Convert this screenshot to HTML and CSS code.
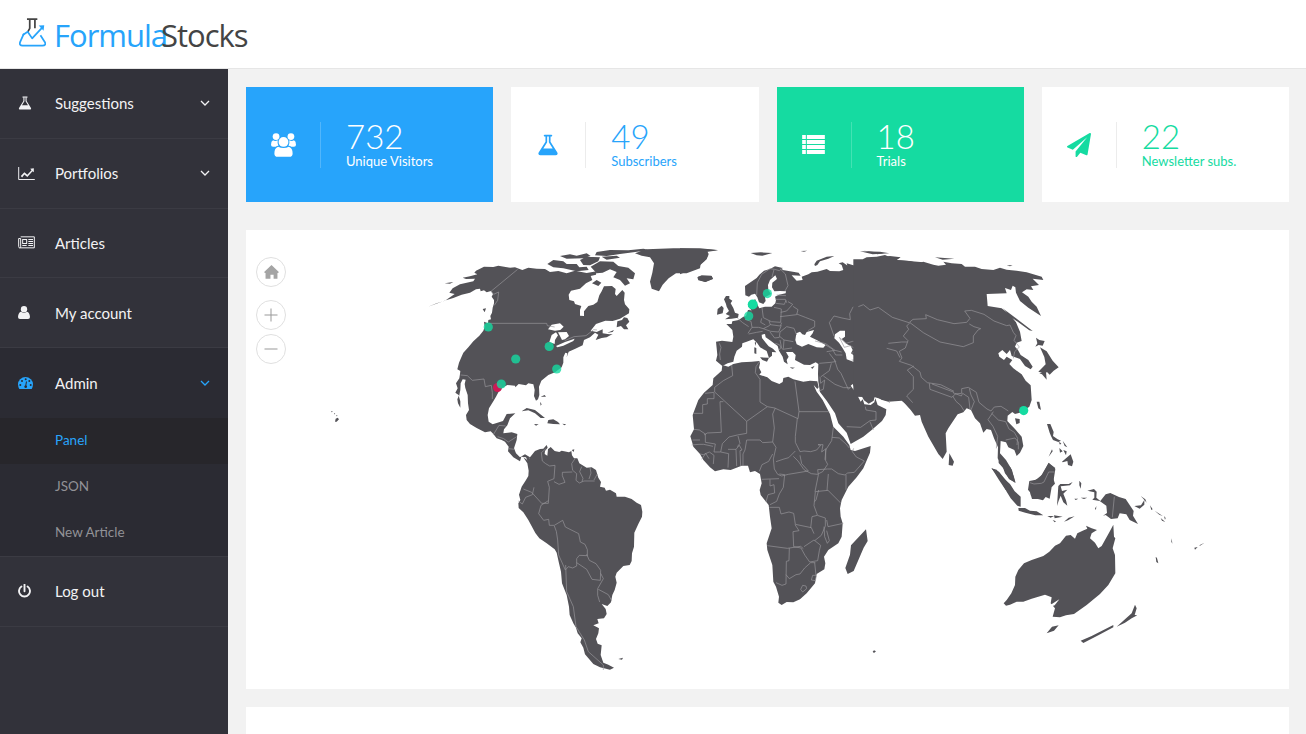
FILE: index.html
```html
<!DOCTYPE html>
<html lang="en">
<head>
<meta charset="utf-8">
<title>FormulaStocks</title>
<link rel="stylesheet" href="styles.css">
</head>
<body>
<svg class="defs" width="0" height="0">
  <symbol id="flask" viewBox="0 0 1664 1792"><path d="M1527 1447q56 89 21.500 153t-140.500 64h-1152q-106 0-140.500-64t21.500-153l503-793v-399h-64q-26 0-45-19t-19-45 19-45 45-19h512q26 0 45 19t19 45-19 45-45 19h-64v399zm-779-725l-272 430h712l-272-430-20-31v-436h-128v436z"/></symbol>
  <symbol id="chevron" viewBox="0 0 10 6"><path d="M1 1l4 4 4-4" fill="none" stroke="currentColor" stroke-width="1.300"/></symbol>
</svg>
<header class="header">
  <svg class="logo-mark" viewBox="0 0 78 84">
    <g fill="none" stroke-linejoin="round">
      <path d="M23 3h30M31 4v26l-6 11M46 4v26" stroke="#444" stroke-width="5"/>
      <path d="M14 45L3 70q-3 10 7 10h58q11 0 7-10L62 50" stroke="#27a4fb" stroke-width="5"/>
      <path d="M11 49l14-9 13 19 29-31" stroke="#27a4fb" stroke-width="5"/>
    </g>
    <path d="M57 22l16-1-2 16z" fill="#27a4fb"/>
  </svg>
  <div class="logo-text"><span class="logo-blue">Formula</span><span class="logo-dark">Stocks</span></div>
</header>
<div class="shell">
  <nav class="sidebar">
    <div class="item"><span class="icon"><svg class="i-flask" viewBox="0 0 1664 1792"><use href="#flask"/></svg></span><span class="label w-sug">Suggestions</span><svg class="chev"><use href="#chevron"/></svg></div>
    <div class="item"><span class="icon"><svg class="i-wide" viewBox="0 0 51 40"><path d="M1.500 0v38.500H51" fill="none" stroke="currentColor" stroke-width="3"/><path d="M8 28l11-12 9 8 13-14-4-5 11-1v12l-4-3-16 18-9-8-7 9z" fill="currentColor"/></svg></span><span class="label">Portfolios</span><svg class="chev"><use href="#chevron"/></svg></div>
    <div class="item"><span class="icon"><svg class="i-wide" viewBox="0 0 51 38"><g fill="none" stroke="currentColor" stroke-width="3"><path d="M8 2h41v33H5q-3 0-3-4V7h6v25q0 3-3 3M31 10h14M31 16h14M31 22h14M13 28h13M31 28h14"/><rect x="14" y="10" width="12" height="12"/></g></svg></span><span class="label">Articles</span></div>
    <div class="item"><span class="icon"><svg class="i-user" viewBox="0 0 36 39"><circle cx="18" cy="9.500" r="9.500"/><path d="M9 17q9 6 18 0 8 2 9 16 0 6-6 6H6q-6 0-6-6 1-14 9-16z"/></svg></span><span class="label">My account</span></div>
    <div class="item open"><span class="icon"><svg class="i-dash" viewBox="0 0 45 36"><path d="M4 36Q0 30 0 22a22.500 22 0 0145 0q0 8-4 14z"/><g fill="#2b2b33"><circle cx="7" cy="24" r="3"/><circle cx="12" cy="12" r="3"/><circle cx="23" cy="7" r="3"/><circle cx="34" cy="12" r="3"/><circle cx="38" cy="24" r="3"/><path d="M24 13l3 1-2 11q4 3 1 7-4 3-7-1-1-5 3-6z"/></g></svg></span><span class="label">Admin</span><svg class="chev"><use href="#chevron"/></svg></div>
    <div class="sub current">Panel</div>
    <div class="sub">JSON</div>
    <div class="sub">New Article</div>
    <div class="item last"><span class="icon"><svg class="i-power" viewBox="0 0 38 40"><path d="M10 7a16 16 0 1018 0M19 1v20" fill="none" stroke="currentColor" stroke-width="5.500" stroke-linecap="round"/></svg></span><span class="label">Log out</span></div>
  </nav>
  <main class="content">
    <section class="cards">
      <article class="card blue-bg"><div class="card-icon"><svg width="25" height="24" viewBox="0 0 74 70"><circle cx="15" cy="10" r="10"/><circle cx="59" cy="10" r="10"/><circle cx="37" cy="26" r="14.500"/><path d="M6 21q6 4 14 0-2 8 2 16-5 0-8 3H6q-6 0-6-6 0-10 6-13zM68 21q-6 4-14 0 2 8-2 16 5 0 8 3h8q6 0 6-6 0-10-6-13zM21 40q16 8 32 0 11 4 11 20 0 10-10 10H20q-10 0-10-10 0-16 11-20z"/></svg></div><div class="card-body"><b>732</b><span>Unique Visitors</span></div></article>
      <article class="card blue"><div class="card-icon"><svg width="22" height="24" viewBox="0 0 1664 1792"><use href="#flask"/></svg></div><div class="card-body"><b>49</b><span>Subscribers</span></div></article>
      <article class="card green-bg"><div class="card-icon"><svg width="23" height="19" viewBox="0 0 68 57"><path d="M0 0h11v12H0zM14 0h54v12H14zM0 15h11v12H0zM14 15h54v12H14zM0 30h11v12H0zM14 30h54v12H14zM0 45h11v12H0zM14 45h54v12H14z"/></svg></div><div class="card-body"><b>18</b><span>Trials</span></div></article>
      <article class="card green"><div class="card-icon"><svg width="24" height="24" viewBox="0 0 1792 1792"><path d="M1764 11q33 24 27 64l-256 1536q-5 29-32 45-14 8-31 8-11 0-24-5l-453-185-242 295q-18 23-49 23-13 0-22-4-19-7-30.500-23.500t-11.500-36.500v-349l864-1059-1069 925-395-162q-37-14-40-55-2-40 32-59l1664-960q15-9 32-9 20 0 36 11z"/></svg></div><div class="card-body"><b>22</b><span>Newsletter subs.</span></div></article>
    </section>
    <section class="map-panel">
      <svg class="map" viewBox="246 230 1043 459">
        <!-- North America -->
        <g transform="translate(420 240) scale(.33333)">
          <path class="land" d="M24 200L55 189 80 180 100 174 125 164 150 158 168 148 180 146 182 154 192 151 200 157 213 153 219 162 215 170 222 180 222 190 218 203 216 218 211 228 213 238 205 240 204 250 192 245 194 260 190 272 178 287 160 304 145 322 130 338 124 352 117 368 112 388 121 393 120 402 118 415 108 430 113 445 106 458 117 466 112 478 114 490 121 503 121 484 117 470 121 450 122 430 128 418 137 419 134 432 136 444 143 465 144 490 147 510 138 525 140 540 150 552 170 564 195 577 212 574 220 582 230 595 245 600 255 605 266 620 264 634 280 652 300 664 304 650 318 652 325 668 330 652 315 643 300 652 288 640 282 625 290 600 292 582 275 577 250 580 252 568 262 556 270 535 286 520 260 522 249 543 218 553 206 545 203 525 207 505 220 484 228 470 240 448 262 435 285 437 286 442 296 432 318 436 325 430 340 433 344 450 342 468 348 482 354 478 358 465 357 440 364 422 385 405 405 397 425 382 430 368 430 352 436 338 442 340 440 352 446 335 466 326 488 316 492 300 510 292 525 278 535 284 527 300 545 294 560 292 578 282 568 283 548 280 548 268 530 276 512 272 528 252 556 242 578 243 600 236 627 220 628 208 615 193 612 180 614 158 607 150 590 168 585 162 587 147 576 138 552 139 545 154 538 166 532 186 520 194 505 198 492 214 492 228 480 227 480 210 484 198 465 192 462 184 448 180 446 164 453 152 480 146 498 130 517 120 512 108 528 104 530 94 500 99 465 92 440 100 415 93 390 96 375 87 350 86 325 83 307 90 285 82 270 83 235 77 220 81 192 80 168 92 163 98 172 103 150 109 128 113 138 117 165 116 160 124 120 133 98 145 88 158 104 162 75 182 50 190z"/>
          <path class="land" d="M382 72L400 60 430 64 440 72 470 72 478 82 500 80 506 90 470 94 430 85 400 82zM420 48L450 43 470 47 500 40 512 48 490 55 440 56zM480 60L500 50 540 52 535 64 510 76 490 75zM530 36L570 30 625 31 670 26 690 30 640 37 600 42 560 48 525 46zM512 80L540 64 580 65 595 78 625 83 645 100 640 118 620 115 630 130 615 137 600 120 580 112 590 96 570 88 548 98 530 100zM516 130L530 120 544 128 535 138zM545 50L590 47 600 53 560 59zM645 40L680 28 760 25 840 25 892 30 862 34 866 42 860 58 842 72 840 85 800 100 768 100 746 115 728 134 717 154 695 146 690 125 697 98 702 70 690 52 665 47zM834 110L848 108 860 110 875 108 879 117 856 126 838 120zM74 130l26-4-10 5zM188 207l10-2-4 12zM592 244L606 240 612 232 622 234 628 245 618 256 625 268 612 268 603 258 590 262zM562 278l20-8-4 6zM305 514L320 504 345 510 360 522 375 534 362 534 345 520 325 511zM385 540L400 538 414 546 420 553 400 552 382 550zM342 552l14 1-8 4zM427 551l12 2-6 3zM362 470l12-5 4 5M360 485l5 8-3 4z"/>
          <path class="water" d="M384 268L395 254 420 250 431 260 421 270 405 272zM388 306L395 285 408 277 414 286 405 300 404 312zM414 277L440 276 447 288 435 298 426 300 420 288zM408 318L435 306 464 296 460 303 430 317 412 322z"/>
          <path class="line" d="M293 88L213 154l8 9 15-7-3 25-10 15M205 250H380l2 7 22 4M434 302l28-12 36-3 23-18 10 1M122 405l20 2 15 14 35-4 4 23 18-4 3 22 0 19M220 584l17-28 20 2M233 590l18 6 14 10 25-16M265 626l20 2"/>
        </g>
        <!-- South America -->
        <g transform="translate(440 370) scale(.33333)">
          <path class="land" d="M250 262L265 272 270 262 285 243 300 237 310 236 320 225 323 233 315 243 314 252 322 257 324 238 332 231 344 243 358 246 365 242 387 247 394 243 396 256 402 265 412 265 418 280 440 293 455 292 468 300 475 323 483 336 480 350 494 353 498 362 510 359 528 370 530 380 555 380 575 387 590 398 603 405 607 425 606 440 595 462 583 488 582 530 576 550 575 573 569 585 550 588 530 608 526 620 530 638 524 660 517 675 513 697 502 708 485 702 497 717 500 732 492 745 472 747 476 760 460 766 477 775 475 790 468 807 473 821 485 826 482 855 490 878 505 884 522 893 510 899 480 892 460 882 435 853 430 833 421 817 425 805 413 790 408 773 400 760 389 735 387 710 380 675 366 640 363 605 357 580 350 548 344 538 320 520 298 505 286 489 265 450 250 427 236 414 235 400 241 390 237 374 245 350 258 330 265 318 266 302 262 280zM535 867l14-4-3 6zM395 240l8-2-2 8z"/>
          <path class="line" d="M318 236l-14 12 3 25 10 8 12 7 16-2-3 40-19 8 5 18-3 48-20 0-30-33-25-10M282 352l-5 22-20 8-10 20-12-9M325 392l-22 14-7 25 15 20 15-3 2 18 15 0 25-15 8 20 40 20 5 25 14 7 7 16 0 18-24-1-8 10v22l-12 6-13-4-9 10-20-45-3-45-4-26-6-16M342 335l15 8 18-6-8-20 0-10 30-1M405 266l-10 15 3 20 12 10-2 20 10 8 14-6 32 0M425 290l-6 15 10 20-3 10M450 293l3 16-6 18M472 312l-10 18M410 578l30 20 16 30 25 3 1-30-14-20-20-10-8-18M377 585l3 80 20 45 8 60 25 40 12 35 45 40v15M482 610l8 16-17 30 0 20 6 20M475 658l30 16 10 18"/>
        </g>
        <!-- Europe and western Asia -->
        <g transform="translate(680 240) scale(.33333)">
          <path class="land" d="M195 138L230 114 238 104 252 92 270 87 285 79 305 83 308 90 330 94 356 98 362 107 335 106 343 115 350 122 368 120 365 110 385 103 395 97 412 95 430 90 440 87 450 93 478 94 490 90 485 75 476 70 488 67 500 75 510 83 522 98 517 108 514 94 505 87 500 70 535 80 530 70 550 62 570 58 590 52 630 48 662 52 650 60 730 67 730 525 710 525 695 507 678 492 665 482 625 485 604 479 585 466 581 482 566 491 552 481 545 468 526 450 518 432 512 437 530 462 542 485 548 478 553 493 572 495 583 487 586 475 593 495 619 508 617 525 606 543 575 570 550 590 512 612 500 578 475 550 465 520 440 482 420 456 415 425 414 402 415 372 407 367 390 375 372 374 355 365 345 360 347 345 338 336 328 336 318 336 326 350 320 360 323 373 312 365 308 350 297 332 293 318 272 302 257 292 255 282 245 284 246 294 256 307 266 319 279 326 289 337 276 336 276 347 267 354 260 333 240 322 232 310 220 298 200 305 187 310 186 320 170 332 163 350 160 365 143 370 127 378 108 362 112 345 110 325 108 305 126 302 157 306 160 290 157 270 139 252 155 252 157 244 176 240 190 230 198 228 204 210 214 210 205 200 208 186 226 178 230 190 238 205 255 200 275 200 286 190 288 180 285 170 297 164 317 160 318 154 300 153 283 154 276 142 277 128 291 117 286 106 270 120 264 135 265 150 273 162 255 172 257 183 250 192 237 187 232 172 225 161 214 164 207 170 196 166z"/>
          <path class="land" d="M132 178L138 168 148 168 148 176 157 182 152 190 160 204 165 218 176 222 174 233 155 236 135 238 150 228 137 222 147 213 140 200 138 192zM113 207L125 197 131 204 128 220 111 224zM52 112L65 106 94 107 99 116 76 126 55 121zM0 25L80 28 115 31 78 36 85 45 75 62 55 80 0 103zM212 39l30-2 35 2-30 8-17-1zM362 33l20-1-10 3zM403 73L410 62 440 50 463 48 445 56 420 64 412 75 405 78zM540 34l60 1 28 5-50 3zM240 352l27 1-6 12-14-5zM223 322l6 2 0 18-6-2zM224 308l4-2v12zM329 382l16 1-8 3zM392 383l12-6-6 9z"/>
          <path class="water" d="M349 280L360 275 367 283 375 285 380 276 402 270 398 280 390 290 410 300 437 315 430 323 410 322 385 312 366 320 350 313 346 300zM465 283L480 272 495 272 495 290 485 297 500 312 512 318 518 330 513 340 527 350 533 363 520 365 500 358 497 340 488 325 477 308 463 295z"/>
          <path class="line" d="M230 166l2-38 13-25 25-17 14 2 14 4 10-8M276 111l6-22M300 86l16 16 8 35-9 16M286 178l30 0 4 10M288 190l25 3 5-12M290 165l28 2M246 203l4 30 24 12 28 2 2-40-22-5M302 217l18-4 18-20-14-8M300 230l50-6 4-15-15-10M305 248l-4 10-30-4-4-12M350 222l26 10 28 11 0 17-20 12M208 210l8 3M195 238l18 6 3 18-12 18M172 234l16 14 18 12M216 262l20 0 14 4 18-9 4-5M245 235l-3 12 14 8M206 282l24-5 18-3M250 266l22 8 24 2 8-20M270 276l14 18 14-2 2-16 20-16 22 5 8 20M300 290l12 10 28 5M286 310l12 4 10 14 28-4M300 300l4 20-6 10M312 300l-2 26M118 310l5 12-4 20 2 18M405 303l32 8 28 20 20 5M437 315l20 12 10 18 20 0M440 335l25-4M448 340l20 26M462 288l-14-40 14-20 24 6 25 5-2-18 10-20 28-4 22 8 10 7 40 27 44 18 18 4-16 25-10 40-48 10-30-8-14-14-30-10-15 0-20 6-20-18 15 30 18-5 28 18 12 6 15 0 20 6 20 16M515 340l22-8 42 28 28-4 12 12 50-10 12-12 25 30 12 12M515 360l40 2 35 15 4 30 18 30-4 24 20 14 0 14M590 377l18-10 38-4 12 6 4 30-16 20-6 18-28 6M660 370l32 4-6 22 14 6-2 42-18 22 8 20M463 358l10 30 10 12 22 48 8-8M418 370l35-3 12-2M454 370l-6 22-25 18M430 408l35 25 26 10 20 0M420 410l2 20 12-10-4 28-14 5M500 560l42 2 28-20 18-2 0-25-30-5-2-10M570 545l10 25M620 345l8-30 14-4 32 5M626 330l24 8 22-4"/>
        </g>
        <!-- Africa -->
        <g transform="translate(680 350) scale(.33333)">
          <path class="land" d="M127 45L145 50 160 42 185 37 215 35 238 33 240 40 237 53 244 67 238 74 262 82 275 93 298 102 308 96 310 84 325 80 340 88 370 95 390 92 412 94 416 112 412 117 401 105 410 125 428 150 450 192 460 230 490 260 508 285 512 300 525 303 572 288 570 308 550 355 530 382 505 410 485 450 480 475 482 500 488 520 485 560 475 580 445 600 432 620 436 640 433 658 410 672 405 700 380 730 360 748 340 757 320 756 305 765 295 758 297 740 288 710 280 695 277 645 262 600 260 580 275 535 270 500 266 465 242 435 239 420 245 400 240 372 225 363 210 367 204 347 185 347 152 360 130 358 105 364 90 352 70 330 60 312 40 290 36 275 31 259 42 238 38 195 55 150 72 128 98 105 100 85 125 62zM558 538l5 35-12 20-30 70-18 9-7-18 14-40 3-28zM578 905l4-4 6 3-6 5z"/>
          <path class="line" d="M155 45l3 32-28 15-26 20v14l96 88 62-44M75 130l28-3M40 190h28v-26l14-2v-16h20v-17M72 255l10-6 42-2-4-92 10 0M238 35l-10 15-2 18 14 20 0 68 22 14 22 4 70 32 3-22-12-90M357 185h91M352 205l-6 54 0 18 14 28 12-2 20 2 18-5 12-14-8-2 15 0-4 22 13-10-3 32 8 15-15 22-16 8-18-2-22-12-18-26-14-14M286 174l-8 18 5 42-5 42 10 16-8 35 3 30 10 16 12 5 20-5 60-10-20-22-5-25M288 335l24-8 14-4 20-20M278 276l-30 2-8-8-40 0-5 30-6 12 0 35M200 214l0 36-28 5-25 6-20 20-5 25-20 0 4-24-30-5 0-25-18-12-16-2M35 285l22-2 14 0 28 6M38 270l22 0M60 312l10 2 18-8 14 10-2 26M65 328l12-18 10 16M122 306l24 5-2 42M144 298h24l2 50M168 298l10-12 8 14-6 2 2 46M174 258l6 22-8 10M238 364l8-20 20-10 12-22M245 388l52-2M270 388v20l12-4 2 25-20 5-6 22M298 372l16 2-4 38-12 20-8 22-20 10M268 472h30l5 20 24-6 14 4 5 33 48 10 8 18M345 524l12 18-18 3 2 45 22 4M262 587l60 8 40-6 8 7M328 594l-1 38-8 2-1 68-12 4-18-8M318 674l10 12 20-12 12-2 14-18 18-16 14 0M363 594l12 22 14 20 24-4 5-30 4-16-20-16-30 20M392 534l4-34 16-4 24 8 0 24-12 28-20 16M404 638l4 38-10 0-4 14 12 2 3-14M362 718l6-12 10 2 2 8-12 10zM440 510l4 20 46-10M432 530l2 30 8 20 6-8-8-30M412 495l-10-28 4-42 38-4 38 38M405 425l10-50-2-16 30-2 12 0 20 14 20 4 8-6 20-2 30-34-24-12-12-16 4-10M445 372l-4 50M416 420l-8 30-4 5M498 375v45M460 232l-5 40-18 28 0 30M456 262l22 2 20 18 10 12"/>
        </g>
        <!-- Eastern Asia -->
        <g transform="translate(860 240) scale(.33333)">
          <path class="land" d="M-20 58L8 58 20 52 50 50 75 45 90 52 120 52 108 60 150 63 175 70 190 65 220 74 235 77 258 74 250 65 275 70 305 72 315 80 345 80 365 87 400 90 420 83 440 89 470 92 500 97 545 110 550 120 518 116 537 135 513 139 520 150 500 148 486 157 505 170 515 185 530 200 543 228 520 213 505 203 480 183 468 158 466 142 458 137 453 150 435 144 440 160 380 162 383 198 425 205 450 225 468 247 480 275 485 303 470 308 465 320 474 330 482 345 505 360 518 380 512 388 495 378 480 357 455 348 450 330 440 342 427 330 415 340 418 350 432 360 440 350 457 360 448 372 460 385 485 403 497 422 512 436 515 480 508 500 485 517 465 522 457 516 443 527 442 543 465 567 485 590 490 618 480 638 470 648 463 630 445 622 438 607 422 603 420 640 438 660 456 690 465 727 448 717 435 700 428 680 413 655 414 622 402 595 393 570 380 567 370 578 360 550 345 535 333 510 320 505 310 517 293 523 265 565 257 580 260 635 248 657 235 642 205 590 185 545 180 525 165 527 152 510 125 480 80 482 45 472 -20 470zM268 640l14 25-4 12-12-2zM12 32l60 8-20 3zM225 52l58 4-35 3zM440 76l18 0-8 3zM428 205l40 30 50 38-10-2-48-35zM528 293l10 7 16 3-6 14-12-2-10 5 6-10zM540 322l20 12 18 28 18 20-15 10-12 12-8-8-8 6-12-5-6-2 22-22-4-22zM538 400l20-5 2 24-14-16zM530 485l8 0 5 25-8-5zM465 535l14 2 0 12-10 4z"/>
          <path class="land" d="M395 685l22 10 40 50-20 5-20-30zM508 728l32-15 26-45 20 20-8 50-65 30z"/>
          <path class="line" d="M-5 200l15-6 20 16 25-8 42 30 50 16 12-10 40-2-2-12 35 15 50 12 38-4 10-12-16-22 20-2 38 12 30 20 38 14 10-2 10 22 8 10-6 14 16 20-14 14-4 20M150 248l40 30 50 28 70 14 30-12 0-20 14-18 8-4-20-6-14-8M150 248l-10 10 6 10-16 20 14 14-8 22-18 10 8 20-8 10 36 12 26 20 4 16 18 16 40 6 40 20M208 430l2 18 66 24 8-8-4-8-64-24M285 462l20-2 0-14 20-4 24 15 8 30 24 20 12 6 10-12 20-2 22 14M278 468l10 16 14 12 10 16M284 460l20 8 4-8 18 12 4 35M328 445l5 20 10 20-10 25M162 378l-20 12 18 20 0 38-20 20 18 20M400 515l-16 24 15 20 14 30-4 36M395 520l20 20 22 5 10 22 16 10 10 18-2 20M437 600l28-6 10 12 0 22M85 310l40-4 18 0M80 325l30 8 10 20"/>
        </g>
        <!-- Islands and Oceania -->
        <g transform="translate(960 400) scale(.33333)">
          <path class="land" d="M94 205l16 4 20 25 20 18 14 22 18 16 0 30-10-3-20-22-12-20-20-38-16-20zM115 165l15 18 22 20 10 28 5 18-20-12-15-30-16-18zM175 324l20 0 15 8 20 2 20 12-24 0-30-8-20-6zM208 243l20-4 20-16 18-34 20 15-8 14 2 18 5 15-10 10-6 35-12-5-8 10-15-4-18 0-6-20-6-8zM291 318l4-60 6-6 25 0 12-6-8 10-28 3 4 14 16-4-12 12 8 20 4 16-12-10-8-20-6 15zM261 72l10 0 10 24-2 12 14 10 10 4-8 4-16-6-6-12-4-10zM276 148l-10 22 12-16zM296 126l8 4-4 4zM298 144l10 10-8 4zM308 122l14 20-8-4zM310 150l10 4-2 12zM306 185l12-10 14-12 8 22-4 14-12-4-2-12-14 4zM358 242l6 8-2 16-4-10zM343 296l12 0-8 4zM362 293l20 0-10 4zM382 272l20-5 8 8-1 18 12 10 16-20 14-4 26 12 20 6 12 18 12 18-2 14 15 25-25-12-10-17-20-3-6 15-20 2-16-12-8 2 12-8-2-22-20-14-22-4 6-6 0-16zM523 318l20-2 10-16 0 14-14 12zM542 288l14 10 4 10-10-12zM570 316l8 12-4 2zM584 332l24 16-10-4zM602 354l14 12-10-4zM612 348l5 6-2 5zM262 348l20 0-10 5zM282 346l26 4-24 5zM278 360l10 4-4 3zM312 365l14-12 18-4-20 12zM405 326l4-8-1 12zM635 415l2 16-3-6zM587 470l4 4 4 16-6-4zM703 443l10-2-8 8zM718 436l16-8-14 9z"/>
          <path class="land" d="M131 610L140 600 154 580 165 555 166 530 175 510 192 490 215 480 250 468 268 455 285 437 300 430 318 407 332 405 345 416 352 400 368 392 382 386 378 377 395 385 411 390 395 400 390 415 405 428 415 445 425 438 435 420 450 393 460 374 462 410 466 415 458 445 465 465 466 520 445 555 420 582 380 615 342 642 318 646 300 652 278 650 285 625 272 610 275 592 255 584 215 596 190 605 170 605 150 614 138 617zM276 680l20-4-14 16-22 8zM362 722L395 708 460 675 460 682 415 706 370 729zM470 680L490 662 515 640 525 614 530 625 524 645 532 646 515 655 495 668z"/>
          <path class="water" d="M272 614l26-16-14 18-12 4z"/>
          <path class="line" d="M210 248l12 4 22-2 8-4 14-30 18 0M463 290l-6 62"/>
        </g>
        <!-- Hawaii -->
        <g transform="translate(240 225) scale(.33333)"><path class="land" d="M285 590l2-9 6-3 4 5-7 7zM273 558l6 2-4 2zM282 564l4 3-4 1zM288 570l5 2-3 2z"/></g>
        <g class="pins">
          <circle class="red" cx="497.500" cy="387.500" r="4.500"/>
          <circle cx="488.300" cy="327" r="4.600"/><circle cx="549.200" cy="346.500" r="4.600"/><circle cx="515.700" cy="359" r="4.600"/><circle cx="556.700" cy="369" r="4.600"/><circle cx="501.300" cy="384" r="4.600"/><circle class="solid" cx="752.700" cy="304.500" r="5"/><circle cx="767.400" cy="293.600" r="4.600"/><circle cx="748.700" cy="316" r="4.600"/><circle class="solid" cx="1023.700" cy="410.600" r="4.600"/>
        </g>
      </svg>
      <div class="controls">
        <button class="round home" aria-label="Home"><svg width="15" height="14" viewBox="0 0 42 40"><path d="M21 0l21 20-2 3h-2v16H27V28h-9v11H4V23H2l-2-3z" fill="#a4a4a4"/></svg></button>
        <button class="round" aria-label="Zoom in"><svg width="14" height="14" viewBox="0 0 14 14"><path d="M.500 7h13M7 .500v13" stroke="#999"/></svg></button>
        <button class="round" aria-label="Zoom out"><svg width="14" height="14" viewBox="0 0 14 14"><path d="M.500 7h13" stroke="#999"/></svg></button>
      </div>
    </section>
    <section class="next-panel"></section>
  </main>
</div>
</body>
</html>
```
FILE: styles.css
```css
* { box-sizing: border-box; }
body { margin: 0; height: 734px; overflow: hidden; background: #f2f2f2; font-family: Lato, "Open Sans", sans-serif; }
.defs { display: block; }
.header { height: 69px; background: #fff; border-bottom: 1px solid #e6e6e6; display: flex; padding-left: 19px; }
.logo-mark { width: 27px; height: 29px; margin-top: 18px; }
.logo-text { margin: 14px 0 0 8px; font: 400 31px/42px "Open Sans", sans-serif; letter-spacing: -1px; display: flex; }
.logo-blue { color: #27a4fb; width: 107px; }
.logo-dark { color: #444; }
.shell { display: flex; height: 665px; }
.sidebar { width: 228px; background: #32323a; flex: none; color: #f2f2f4; }
.item { height: 69.750px; border-bottom: 1px solid #3b3b43; display: flex; align-items: center; padding: 0 18px; font-size: 15px; }
.item.open { background: #2b2b33; border-bottom: 0; }
.item.open .icon, .item.open .chev { color: #27a4fb; }
.item.last { border-top: 1px solid #3b3b43; height: 71px; }
.icon { width: 37px; display: flex; }
.icon svg { fill: currentColor; }
.i-flask { width: 14px; height: 16px; }
.i-wide { width: 17px; height: 13px; }
.i-user { width: 12px; height: 13px; }
.i-dash { width: 15px; height: 12px; }
.i-power { width: 13px; height: 14px; }
.label { flex: 1; }
.chev { width: 10px; height: 6px; }
.sub { height: 46px; line-height: 45px; padding-left: 55px; font-size: 13.500px; color: #929297; background: #2b2b33; }
.sub.current { background: #27262b; color: #27a4fb; }
.content { flex: 1; padding: 18px 17px 0 18px; }
.cards { display: grid; grid-template-columns: repeat(4, 1fr); gap: 18px; }
.card { height: 115px; background: #fff; display: flex; align-items: center; fill: currentColor; }
.card-icon { width: 75px; height: 46px; display: flex; align-items: center; justify-content: center; border-right: 1px solid #ececec; }
.card-body { padding-left: 25px; display: flex; flex-direction: column; }
.card-body b { font-weight: 300; font-size: 33px; line-height: 33px; }
.card-body span { font-size: 13px; line-height: 16px; }
.blue-bg { background: #27a4fb; color: #fff; }
.green-bg { background: #15dba1; color: #fff; }
.blue-bg .card-icon, .green-bg .card-icon { border-color: rgba(255, 255, 255, .2); }
.blue { color: #27a4fb; }
.green { color: #15dba1; }
.map-panel { position: relative; height: 459px; margin-top: 28px; background: #fff; }
.map { display: block; width: 100%; height: 459px; }
.land { fill: #535257; }
.water { fill: #fff; }
.line { fill: none; stroke: #98979b; stroke-width: 2; stroke-linejoin: round; }
.pins { fill: #15dba1; fill-opacity: .8; }
.pins .solid { fill-opacity: 1; }
.pins .red { fill: #cc1a55; fill-opacity: 1; }
.controls { position: absolute; left: 10px; top: 27px; display: flex; flex-direction: column; gap: 4px; }
.round { width: 30px; height: 30px; padding: 0; border: 1px solid #e0e0e0; border-radius: 50%; background: #fff; display: flex; align-items: center; justify-content: center; }
.home { margin-bottom: 9px; }
.next-panel { height: 60px; margin-top: 18px; background: #fff; }
```
